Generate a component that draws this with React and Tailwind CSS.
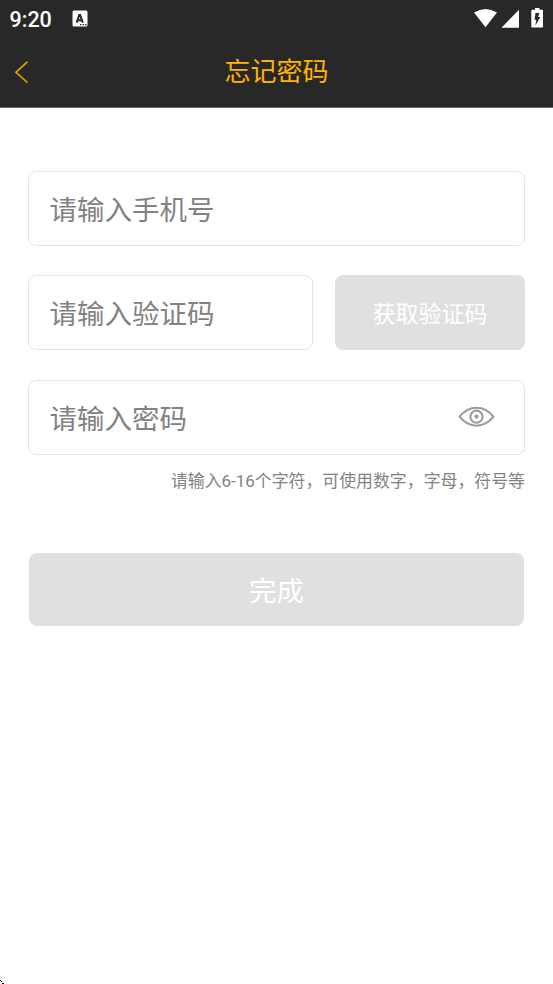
function StatusBar() {
  return (
    <div className="flex h-9 items-center pl-[9.5px] pr-[8px] text-white">
      <span className="w-[62px] pt-[3px] text-[21.5px] font-medium leading-none">9:20</span>
      <svg className="h-[17px] w-4" viewBox="0 0 16 17">
        <rect x="0.5" y="0.5" width="15" height="16" rx="1.5" fill="#fff" />
        <path d="M4.6 12.6 L7.3 5 h0.8 L10.8 12.6 M5.7 10.3 h4.2" fill="none" stroke="#282828" strokeWidth="2" />
        <path d="M8 14.6 h1.4 M10.6 14.6 h1.4 M13.1 14.6 h1.4" stroke="#282828" strokeWidth="1.3" />
      </svg>
      <svg className="ml-auto h-5 w-[72px]" viewBox="0 0 72 20">
        <path d="M1 4.2 Q12.5 -3 24 4.2 L12.5 19 Z" transform="translate(0 .3)" fill="#fff" />
        <path d="M46 1.8 V19.8 H28.5 Z" fill="#fff" />
        <path d="M59.3 1.8 H62 V0 H66.5 V1.8 H69 Q70 1.8 70 2.8 V18.6 Q70 19.6 69 19.6 H59.3 Q58.3 19.6 58.3 18.6 V2.8 Q58.3 1.8 59.3 1.8 Z" fill="#fff" />
        <path d="M62.5 5 H66.5 L65 9 H67.3 L62.4 17.5 L63.2 11.8 H61.5 Z" fill="#282828" />
      </svg>
    </div>
  );
}

function Header() {
  return (
    <header className="h-[108px] border-b border-[#686868] bg-[#282828]">
      <StatusBar />
      <div className="grid h-[71px] grid-cols-[60px_1fr_60px] items-center">
        <svg className="ml-[14px] mt-px h-6 w-4" viewBox="0 0 16 24" fill="none" stroke="#dca000" strokeWidth="1.7">
          <path d="M13.5 1.6 L2 12.3 L13.5 22.7" />
        </svg>
        <h1 className="pt-px text-center text-[26px] leading-none text-[#ffb400]">忘记密码</h1>
      </div>
    </header>
  );
}

function Field({ placeholder, children }) {
  return (
    <div className="flex h-[75px] flex-1 items-center justify-between rounded-lg border border-[#e4e4e4] bg-white pl-[20.5px] pr-[29px]">
      <span className="pt-[4px] text-[27.5px] leading-none text-[#828282]">{placeholder}</span>
      {children}
    </div>
  );
}

function EyeIcon() {
  return (
    <svg className="h-6 w-[37px]" viewBox="0 0 37 24" fill="none" stroke="#9c9c9c" strokeWidth="2.1">
      <path d="M1.6 11.7 C11 -0.3 26 -0.3 35.4 11.7 C26 23.7 11 23.7 1.6 11.7 Z" />
      <circle cx="18.5" cy="11.7" r="6.1" />
      <circle cx="18.5" cy="11.7" r="2.1" fill="#9c9c9c" stroke="none" />
    </svg>
  );
}

export default function App() {
  return (
    <div className="h-[984px] w-[553px] overflow-hidden bg-white font-['Roboto','Noto_Sans_CJK_SC',sans-serif]">
      <Header />
      <main className="flex h-[876px] flex-col px-7 pt-[63px]">
        <div className="flex">
          <Field placeholder="请输入手机号" />
        </div>
        <div className="mt-[29.4px] flex gap-[22px]">
          <Field placeholder="请输入验证码" />
          <button className="h-[75px] w-[190px] rounded-lg bg-[#e0e0e0] pt-[3.5px] text-[23px] leading-none text-white">获取验证码</button>
        </div>
        <div className="mt-[29.6px] flex">
          <Field placeholder="请输入密码">
            <EyeIcon />
          </Field>
        </div>
        <p className="mt-[18px] whitespace-nowrap text-right text-[16.9px] leading-none text-[#828282]">
          请输入6-16个字符，可使用数字，字母，符号等
        </p>
        <button className="mx-px mt-[63.5px] h-[73px] shrink-0 rounded-lg bg-[#e0e0e0] pt-[4px] text-[27.5px] leading-none text-white">完成</button>
        <svg className="-ml-7 mt-auto h-1 w-1" viewBox="0 0 4 4" fill="#000">
          <path d="M0 0h1v1h1v1H1V1H0zM2 3h2v1H2z" />
        </svg>
      </main>
    </div>
  );
}
